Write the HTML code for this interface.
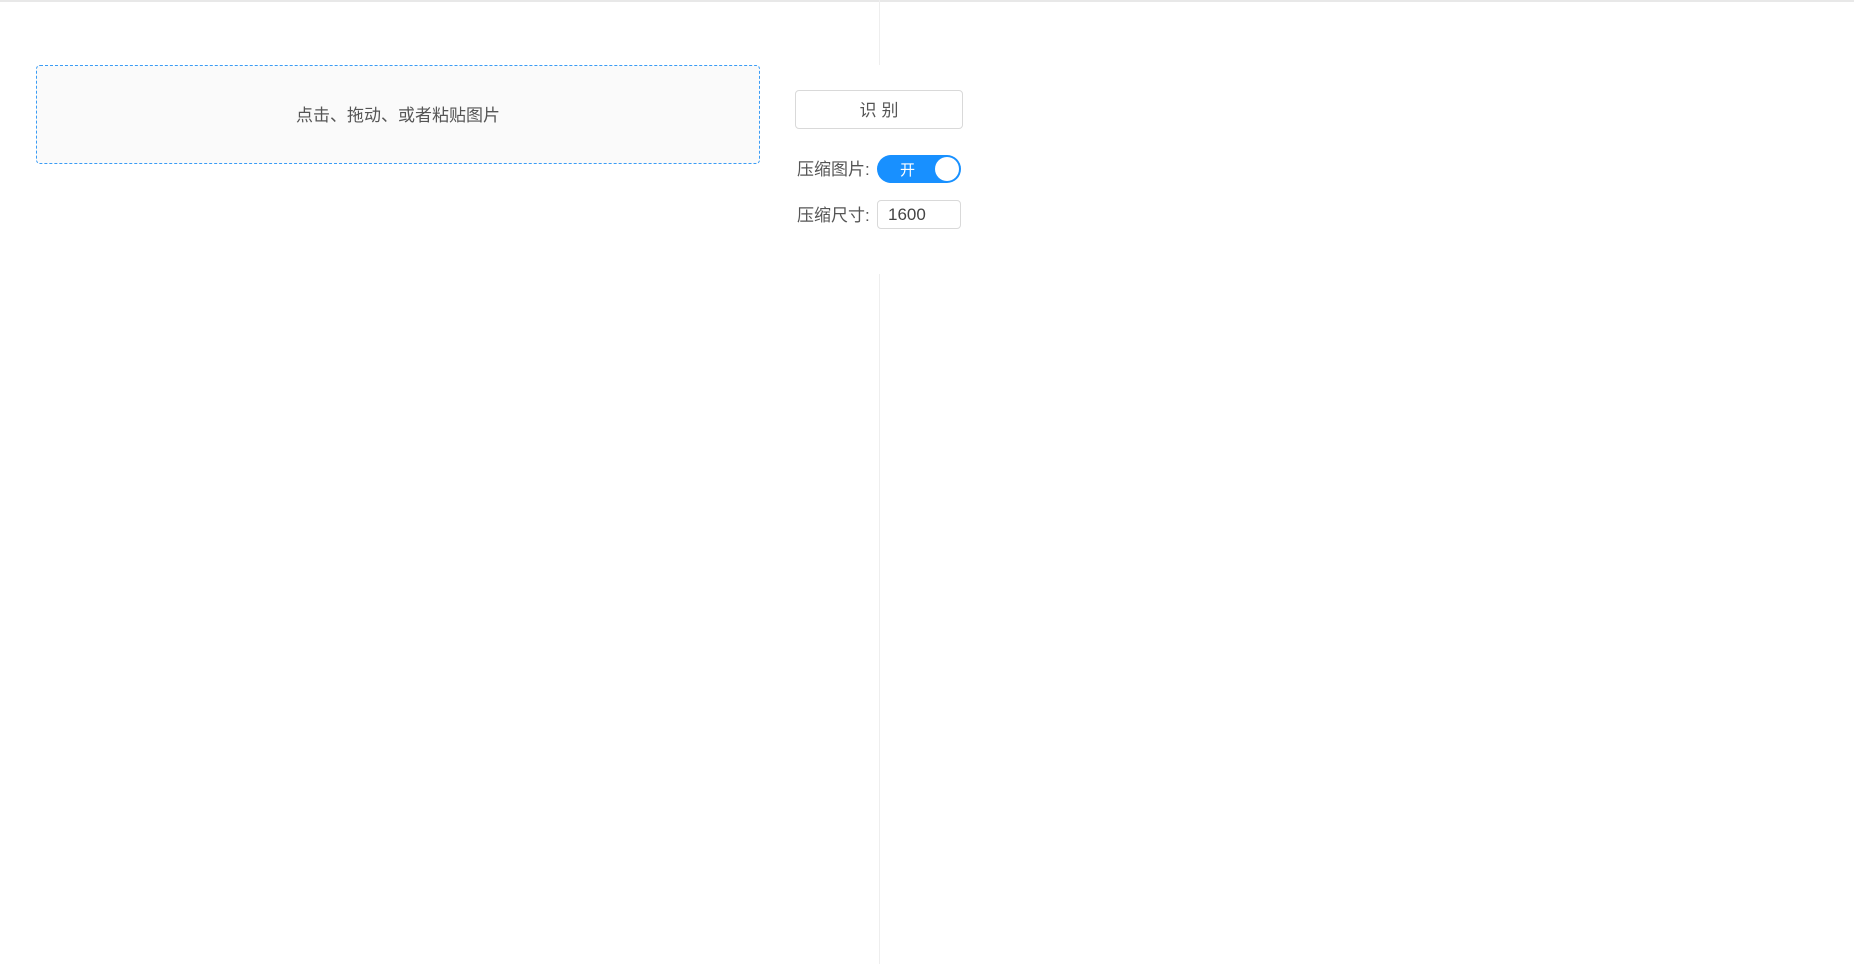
<!DOCTYPE html>
<html><head><meta charset="utf-8"><style>
body{margin:0;width:1854px;height:964px;background:#fff;position:relative;overflow:hidden;font-family:"Liberation Sans","Noto Sans CJK SC",sans-serif;color:#555}
.top{position:absolute;left:0;top:0;width:1854px;height:2px;background:#e8e8e8}
.vl{position:absolute;left:879px;width:1px;background:#eee}
.drop{position:absolute;left:36px;top:65px;width:722px;height:97px;border:1px dashed #3a9cf5;border-radius:4px;background:#fafafa;font-size:17px;display:flex;align-items:center;justify-content:center;color:#555;padding-bottom:3px;box-sizing:content-box;height:94px}
.btn{position:absolute;left:795px;top:90px;width:168px;height:39px;box-sizing:border-box;border:1px solid #d9d9d9;border-radius:4px;font-size:17px;display:flex;align-items:center;justify-content:center;letter-spacing:5px;padding-left:5px;padding-bottom:3px}
.lbl{position:absolute;left:797px;font-size:17px;color:#555}
.tg{position:absolute;left:877px;top:155px;width:84px;height:28px;border-radius:14px;background:#1890ff;color:#fff;font-size:15px}
.tg span{position:absolute;left:23px;top:4px}
.tg i{position:absolute;right:2px;top:2px;width:24px;height:24px;border-radius:50%;background:#fff}
.inp{position:absolute;left:877px;top:200px;border:1px solid #d9d9d9;border-radius:4px;font-size:17px;color:#444;line-height:27px;padding-left:10px;box-sizing:border-box;width:84px;height:29px}
</style></head><body>
<div class="top"></div>
<div class="vl" style="top:0;height:65px"></div>
<div class="vl" style="top:274px;height:690px"></div>
<div class="drop">点击、拖动、或者粘贴图片</div>
<div class="btn">识别</div>
<div class="lbl" style="top:155px">压缩图片:</div>
<div class="tg"><span>开</span><i></i></div>
<div class="lbl" style="top:201px">压缩尺寸:</div>
<div class="inp">1600</div>
</body></html>
